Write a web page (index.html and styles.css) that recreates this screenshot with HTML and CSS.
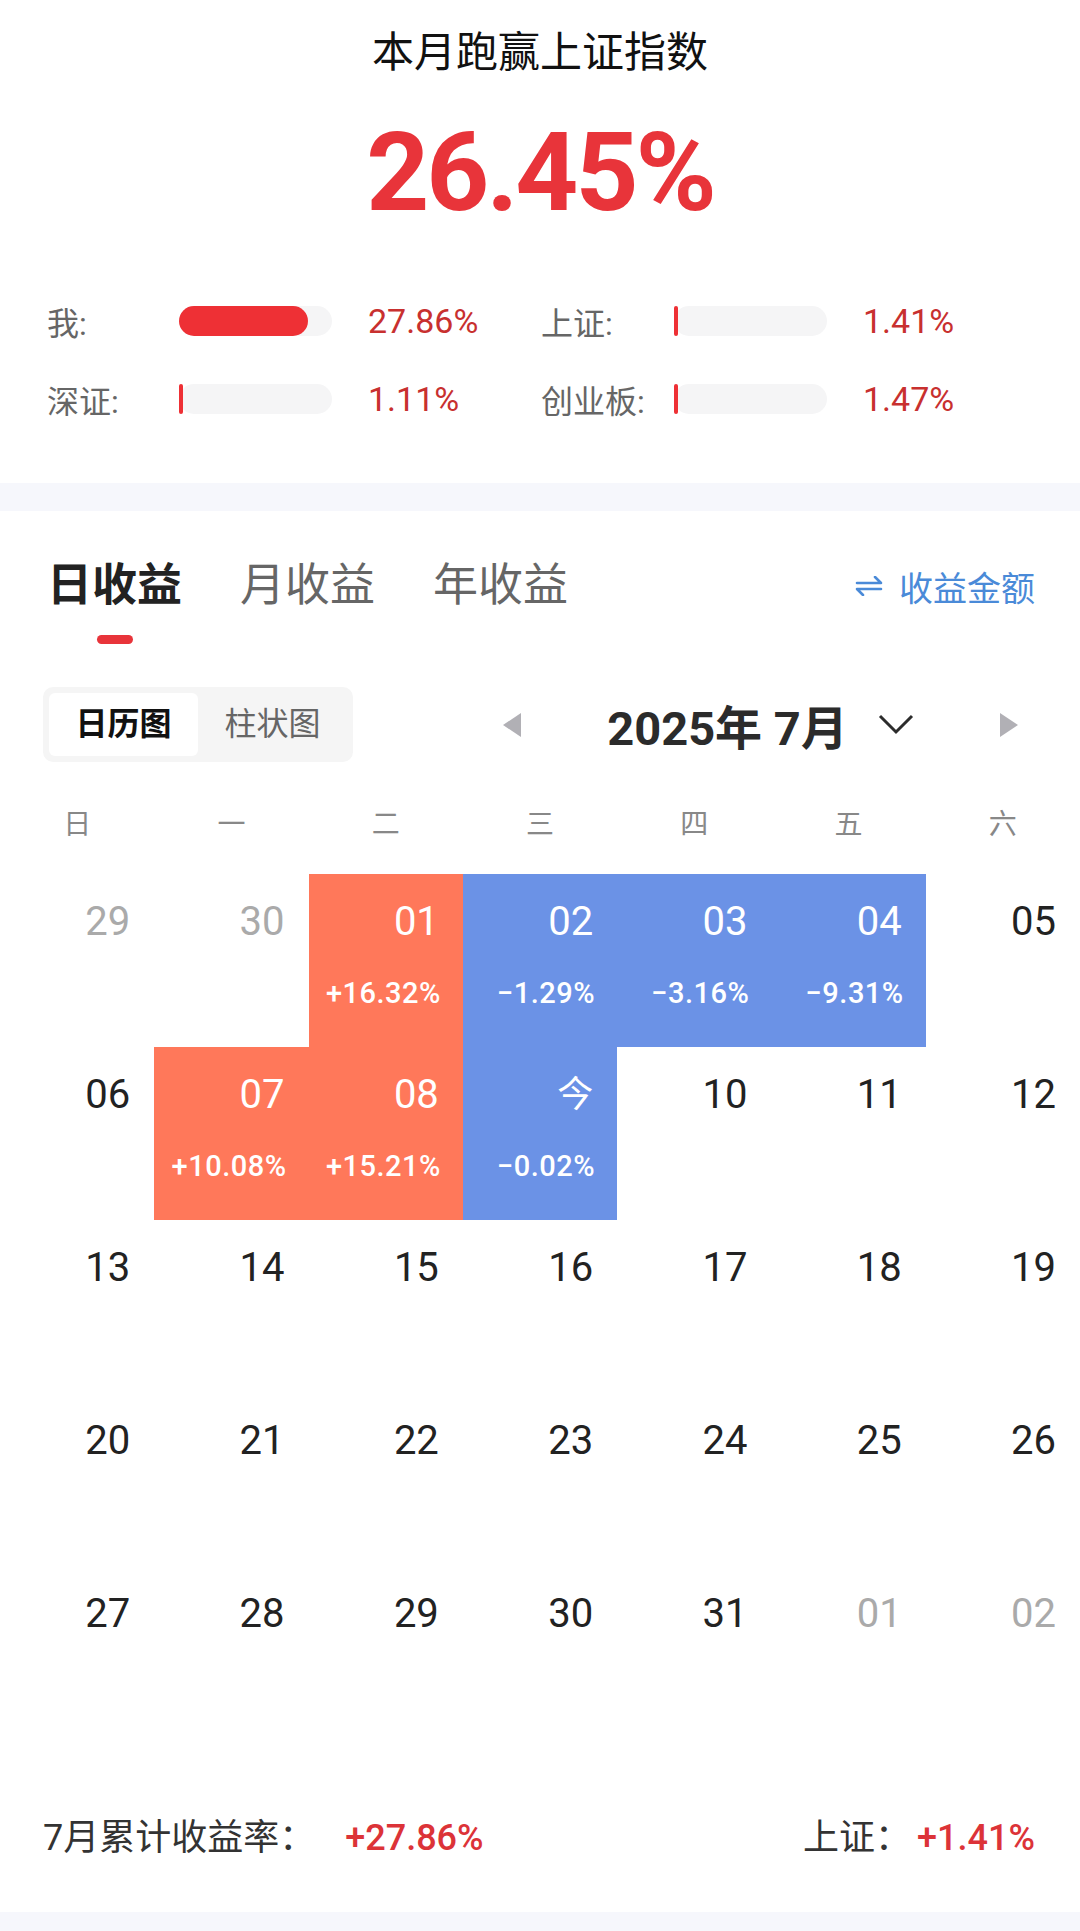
FILE: index.html
```html
<!DOCTYPE html>
<html lang="zh-CN">
<head>
    <meta charset="UTF-8">
    <meta name="viewport" content="width=device-width, initial-scale=1.0">
    <title>收益日历</title>
    <link rel="stylesheet" href="styles.css">
</head>
<body>
    <div class="summary">
        <div class="title">本月跑赢上证指数</div>
        <div class="bignum">26.45%</div>
        <div class="stats">
            <div class="lbl">我:</div>
            <div class="track"><div class="fill" style="width: 84%"></div></div>
            <div class="val">27.86%</div>
            <div class="lbl">上证:</div>
            <div class="track"><div class="fill thin"></div></div>
            <div class="val">1.41%</div>
            <div class="lbl">深证:</div>
            <div class="track"><div class="fill thin"></div></div>
            <div class="val">1.11%</div>
            <div class="lbl">创业板:</div>
            <div class="track"><div class="fill thin"></div></div>
            <div class="val">1.47%</div>
        </div>
    </div>

    <div class="panel">
        <div class="tabs">
            <div class="tab active">日收益</div>
            <div class="tab">月收益</div>
            <div class="tab">年收益</div>
            <div class="switch">
                <svg width="28" height="20" viewBox="0 0 28 20"><path d="M2 7 H26 L20 1 M26 13 H2 L8 19" fill="none" stroke="#4a8ad8" stroke-width="2.6" stroke-linecap="round" stroke-linejoin="round"/></svg>
                <span>收益金额</span>
            </div>
        </div>

        <div class="toolbar">
            <div class="seg">
                <div class="seg-item on">日历图</div>
                <div class="seg-item">柱状图</div>
            </div>
            <div class="monthnav">
                <svg width="18" height="24" viewBox="0 0 18 24"><polygon points="18,0 18,24 0,12" fill="#b1b0b5"/></svg>
                <div class="month">
                    <span>2025年 7月</span>
                    <svg width="36" height="22" viewBox="0 0 36 22"><path d="M2 2 L18 18 L34 2" fill="none" stroke="#2c2c2c" stroke-width="3"/></svg>
                </div>
                <svg width="18" height="24" viewBox="0 0 18 24"><polygon points="0,0 0,24 18,12" fill="#b1b0b5"/></svg>
            </div>
        </div>

        <div class="weekdays">
            <div>日</div><div>一</div><div>二</div><div>三</div><div>四</div><div>五</div><div>六</div>
        </div>

        <div class="cal">
            <div class="day muted"><div class="num">29</div></div>
            <div class="day muted"><div class="num">30</div></div>
            <div class="day up"><div class="num">01</div><div class="pct">+16.32%</div></div>
            <div class="day down"><div class="num">02</div><div class="pct">−1.29%</div></div>
            <div class="day down"><div class="num">03</div><div class="pct">−3.16%</div></div>
            <div class="day down"><div class="num">04</div><div class="pct">−9.31%</div></div>
            <div class="day"><div class="num">05</div></div>

            <div class="day"><div class="num">06</div></div>
            <div class="day up"><div class="num">07</div><div class="pct">+10.08%</div></div>
            <div class="day up"><div class="num">08</div><div class="pct">+15.21%</div></div>
            <div class="day down"><div class="num today">今</div><div class="pct">−0.02%</div></div>
            <div class="day"><div class="num">10</div></div>
            <div class="day"><div class="num">11</div></div>
            <div class="day"><div class="num">12</div></div>

            <div class="day"><div class="num">13</div></div>
            <div class="day"><div class="num">14</div></div>
            <div class="day"><div class="num">15</div></div>
            <div class="day"><div class="num">16</div></div>
            <div class="day"><div class="num">17</div></div>
            <div class="day"><div class="num">18</div></div>
            <div class="day"><div class="num">19</div></div>

            <div class="day"><div class="num">20</div></div>
            <div class="day"><div class="num">21</div></div>
            <div class="day"><div class="num">22</div></div>
            <div class="day"><div class="num">23</div></div>
            <div class="day"><div class="num">24</div></div>
            <div class="day"><div class="num">25</div></div>
            <div class="day"><div class="num">26</div></div>

            <div class="day"><div class="num">27</div></div>
            <div class="day"><div class="num">28</div></div>
            <div class="day"><div class="num">29</div></div>
            <div class="day"><div class="num">30</div></div>
            <div class="day"><div class="num">31</div></div>
            <div class="day muted"><div class="num">01</div></div>
            <div class="day muted"><div class="num">02</div></div>
        </div>

        <div class="footer">
            <div class="foot-item">
                <span class="foot-lbl">7月累计收益率：</span><span class="foot-val">+27.86%</span>
            </div>
            <div class="foot-item">
                <span class="foot-lbl short">上证：</span><span class="foot-val">+1.41%</span>
            </div>
        </div>
    </div>
</body>
</html>
```

FILE: styles.css
```css
body { margin: 0; background: #f6f7fc; font-family: Roboto, "Noto Sans CJK SC", sans-serif; color: #222; }

.summary { background: #fff; padding: 28px 0 45px; text-align: center; }
.title { font-size: 42px; line-height: 50px; color: #111; }
.bignum { font-size: 110px; line-height: 110px; font-weight: 700; color: #e8343a; letter-spacing: -3px; margin-top: 40px; }

.stats { display: grid; grid-template-columns: 132px 153px 209px 133px 153px 1fr; grid-auto-rows: 78px; align-items: center; padding-left: 47px; margin-top: 54px; text-align: left; }
.lbl { font-size: 32px; color: #666; }
.track { height: 30px; border-radius: 15px; background: #f5f5f6; }
.fill { height: 100%; border-radius: 15px; background: #ee3035; }
.fill.thin { width: 4px; border-radius: 2px; }
.val { font-size: 34px; color: #c8302f; padding-left: 36px; }

.panel { background: #fff; margin-top: 28px; padding-bottom: 42px; }

.tabs { display: flex; align-items: flex-start; padding: 45px 45px 0 47px; gap: 58px; }
.tab { font-size: 45px; line-height: 60px; color: #666; display: flex; flex-direction: column; align-items: center; }
.tab.active { font-weight: 700; color: #222; }
.tab.active::after { content: ""; display: block; width: 36px; height: 9px; border-radius: 5px; background: #e8343a; margin-top: 19px; }
.switch { margin-left: auto; display: flex; align-items: center; gap: 16px; height: 60px; font-size: 34px; color: #4a8ad8; }

.toolbar { display: flex; align-items: center; padding: 0 62px 0 43px; margin-top: 43px; }
.seg { display: flex; background: #f5f5f5; border-radius: 10px; padding: 6px; }
.seg-item { width: 149px; height: 63px; line-height: 63px; text-align: center; font-size: 32px; color: #666; border-radius: 6px; }
.seg-item.on { background: #fff; color: #111; font-weight: 700; }
.monthnav { flex: 1; display: flex; align-items: center; justify-content: space-between; margin-left: 150px; }
.month { display: flex; align-items: center; gap: 30px; font-size: 47px; font-weight: 700; color: #2b2b2b; }

.weekdays { display: grid; grid-template-columns: repeat(7, 1fr); margin-top: 39px; line-height: 48px; font-size: 28px; color: #888; text-align: center; }

.cal { display: grid; grid-template-columns: repeat(7, 1fr); grid-auto-rows: 173px; margin-top: 25px; }
.day { text-align: right; padding: 28px 24px 0 0; }
.num { font-size: 40px; line-height: 40px; color: #222; }
.num.today { font-size: 36px; }
.pct { font-size: 29px; line-height: 28px; font-weight: 500; letter-spacing: 0.5px; color: #fff; margin-top: 37px; margin-right: -2px; }
.day.muted .num { color: #aaa; }
.day.up { background: #ff785a; }
.day.down { background: #6b92e6; }
.day.up .num, .day.down .num { color: #fff; }

.footer { display: flex; justify-content: space-between; align-items: center; padding: 0 45px 0 43px; margin-top: 74px; line-height: 50px; }
.foot-lbl { font-size: 36px; color: #333; margin-right: 30px; }
.foot-lbl.short { margin-right: 6px; }
.foot-val { font-size: 36px; font-weight: 500; color: #dc3338; }
```
